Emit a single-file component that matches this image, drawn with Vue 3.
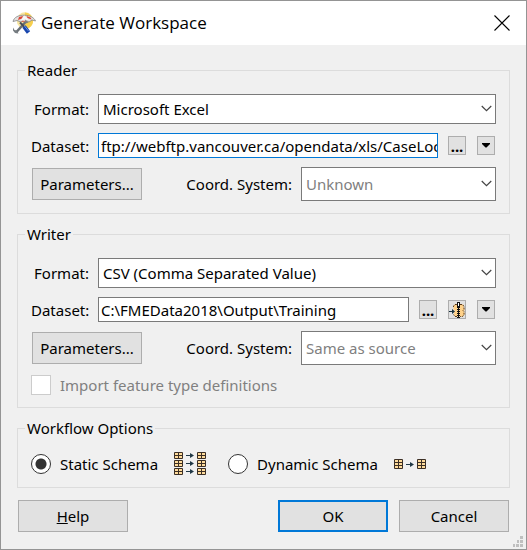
<script setup>
import { ref } from 'vue'

const readerFormat = ref('Microsoft Excel')
const readerDataset = ref('ftp://webftp.vancouver.ca/opendata/xls/CaseLoc')
const readerSystem = ref('Unknown')
const writerFormat = ref('CSV (Comma Separated Value)')
const writerDataset = ref('C:\\FMEData2018\\Output\\Training')
const writerSystem = ref('Same as source')
const importDefinitions = ref(false)
const schema = ref('static')
</script>

<template>
  <main class="dialog">
    <header class="titlebar">
      <svg class="app-icon" width="24" height="24" viewBox="0 0 24 24" aria-hidden="true">
        <circle cx="13" cy="9.500" r="8.300" fill="#f8e5a0" />
        <path d="M13 1.500a8.500 8.500 0 0 1 8 8.500c0 4-3 7-6 8l-3-5z" fill="#f6cf4e" />
        <path d="M1 10.500C2 6 7 4 12.500 4.200S22 6.500 23.500 10l-3.500-1-3 2-4-2-4 2-4-1.500z" fill="#e4e1df" stroke="#77777a" stroke-width=".7" />
        <path d="M7 6l4-1-1 2.500-4 1.500zM14.500 5l4 1.500 1 2-4-1.500zM9 10.500l3-1.500 3 2z" fill="#dc4436" />
        <path d="M9 8.500l3.500-4 4 4-4 2z" fill="#fff" opacity=".7" />
        <path d="M4 21.500L13.500 11" stroke="#6b7176" stroke-width="2.600" />
        <path d="M1 16.500l1.500 2.500 2.500.500 1.500 3-3.500-.500-2-2.500zM13 8.500l3.500 3-3 1z" fill="#777d82" />
        <path d="M8 11.500l5 5" stroke="#484e57" stroke-width="2" />
        <path d="M12 15.500l4.500 6" stroke="#1745ad" stroke-width="4" />
        <path d="M12.500 15l4 5" stroke="#6e94dd" stroke-width="1" />
      </svg>
      <h1>Generate Workspace</h1>
      <button class="close" type="button" aria-label="Close">
        <svg width="16" height="16" viewBox="0 0 16 16"><path d="M.5.5l15 15m0-15l-15 15" stroke="#000" stroke-width="1.100" /></svg>
      </button>
    </header>

    <form class="body" @submit.prevent>
      <fieldset class="group">
        <legend>Reader</legend>
        <div class="rows">
          <div class="row">
            <label class="name" for="reader-format">Format:</label>
            <div class="combo">
              <select id="reader-format" v-model="readerFormat"><option>Microsoft Excel</option></select>
              <svg class="chevron" viewBox="0 0 12 7"><path d="M.8.8L6 5.800 11.200.8" stroke-width="1.300" /></svg>
            </div>
          </div>
          <div class="row">
            <label class="name" for="reader-dataset">Dataset:</label>
            <input id="reader-dataset" v-model="readerDataset" class="text active" type="text" />
            <button class="tool dots" type="button">...</button>
            <button class="tool" type="button" aria-label="More"><svg width="8" height="5" viewBox="0 0 8 5"><path d="M0 0h8v1L4.500 4.500h-1L0 1z" /></svg></button>
          </div>
          <div class="row system">
            <button class="btn" type="button">Parameters...</button>
            <label for="reader-system">Coord. System:</label>
            <div class="combo tall">
              <select id="reader-system" v-model="readerSystem" class="muted"><option>Unknown</option></select>
              <svg class="chevron" viewBox="0 0 12 7"><path d="M.8.8L6 5.800 11.200.8" stroke-width="1.300" /></svg>
            </div>
          </div>
        </div>
      </fieldset>

      <fieldset class="group">
        <legend>Writer</legend>
        <div class="rows">
          <div class="row">
            <label class="name" for="writer-format">Format:</label>
            <div class="combo">
              <select id="writer-format" v-model="writerFormat"><option>CSV (Comma Separated Value)</option></select>
              <svg class="chevron" viewBox="0 0 12 7"><path d="M.8.8L6 5.800 11.200.8" stroke-width="1.300" /></svg>
            </div>
          </div>
          <div class="row">
            <label class="name" for="writer-dataset">Dataset:</label>
            <input id="writer-dataset" v-model="writerDataset" class="text" type="text" />
            <button class="tool dots" type="button">...</button>
            <button class="tool" type="button" aria-label="Zip">
              <svg width="16" height="16" viewBox="0 0 16 16">
                <path d="M5.500 2.500h9v3l1 1v2l-1 1 1 1v2l-1.500 2h-8l-1-2v-3l1-1-1.500-1v-3z" fill="#ffd28a" />
                <path d="M4.500 5V4l1.500-1.500h2M11 2.500h2.500l1.500 2v3l-1 1 1 1v3l-1.500 2H11M8 14.500H6l-1.500-2" fill="none" stroke="#5b3b18" stroke-dasharray="2 1" />
                <path d="M0 9.500h4" stroke="#17313e" />
                <path d="M3 7l3 2.500L3 12z" fill="#17313e" />
                <rect x="8.500" y=".5" width="2" height="4" fill="#fff" stroke="#111" />
                <path d="M9.500 5v11" stroke="#111" stroke-width="3" stroke-dasharray="1 1" />
                <path d="M9.500 5v11" stroke="#111" />
              </svg>
            </button>
            <button class="tool" type="button" aria-label="More"><svg width="8" height="5" viewBox="0 0 8 5"><path d="M0 0h8v1L4.500 4.500h-1L0 1z" /></svg></button>
          </div>
          <div class="row system">
            <button class="btn" type="button">Parameters...</button>
            <label for="writer-system">Coord. System:</label>
            <div class="combo tall">
              <select id="writer-system" v-model="writerSystem" class="muted"><option>Same as source</option></select>
              <svg class="chevron" viewBox="0 0 12 7"><path d="M.8.8L6 5.800 11.200.8" stroke-width="1.300" /></svg>
            </div>
          </div>
          <label class="choice muted">
            <input v-model="importDefinitions" class="check" type="checkbox" disabled />
            Import feature type definitions
          </label>
        </div>
      </fieldset>

      <fieldset class="group">
        <legend>Workflow Options</legend>
        <div class="options">
          <label class="choice">
            <input v-model="schema" class="radio" type="radio" name="schema" value="static" />
            Static Schema
            <svg class="schema" width="32" height="23" viewBox="0 0 32 23" aria-hidden="true">
              <g v-for="y in [0, 8, 16]" :key="y" :transform="`translate(0 ${y})`">
                <g v-for="x in [0, 23]" :key="x" :transform="`translate(${x} 0)`">
                  <path d="M.5.5h8v6h-8z" fill="#ffdc9c" stroke="#3c2f25" />
                  <path d="M4.500 1v5M1 3.500h7" stroke="#3c2f25" />
                </g>
                <path d="M12 3.500h6" stroke="#203846" />
                <path d="M16 1l4 2.500L16 6z" fill="#203846" />
              </g>
            </svg>
          </label>
          <label class="choice">
            <input v-model="schema" class="radio" type="radio" name="schema" value="dynamic" />
            Dynamic Schema
            <svg class="schema" width="32" height="10" viewBox="0 0 32 10" aria-hidden="true">
              <g v-for="x in [0, 23]" :key="x" :transform="`translate(${x} 0)`">
                <path d="M.5.5h8v9h-8z" fill="#ffdc9c" stroke="#3c2f25" />
                <path d="M4.500 1v8M1 3.500h7M1 6.500h7" stroke="#3c2f25" />
              </g>
              <path d="M12 5.500h6" stroke="#203846" />
              <path d="M16 3l4 2.500L16 8z" fill="#203846" />
            </svg>
          </label>
        </div>
      </fieldset>

      <footer class="actions">
        <button class="btn help" type="button"><u>H</u>elp</button>
        <button class="btn primary" type="submit">OK</button>
        <button class="btn" type="button">Cancel</button>
      </footer>
    </form>

    <svg class="grip" width="10" height="11" viewBox="0 0 10 11" aria-hidden="true">
      <path d="M7 0h3v3H7zM4 4h2v3H4zM7 4h3v3H7zM0 8h2v3H0zM3 8h3v3H3zM7 8h3v3H7z" fill="#bfbfbf" />
    </svg>
  </main>
</template>

<style>
body {
  margin: 0;
  background: #f0f0f0;
}
</style>

<style scoped>
.dialog,
.dialog * {
  box-sizing: border-box;
}
.dialog {
  position: relative;
  min-height: 100vh;
  border: 1px solid #949494;
  background: #f0f0f0;
  color: #000;
  font: 15px/20px "Noto Sans", "Open Sans", sans-serif;
}
button,
input,
select {
  margin: 0;
  font: inherit;
  color: inherit;
  border-radius: 0;
  outline: none;
}
.titlebar {
  display: flex;
  align-items: center;
  height: 44px;
  padding: 0 16px 0 11px;
  background: #fff;
}
h1 {
  flex: 1;
  margin: 0 0 0 5px;
  font: 17px/24px "Open Sans", "Noto Sans", sans-serif;
}
.close {
  display: flex;
  padding: 0;
  border: 0;
  background: none;
}
.body {
  padding: 15px 16px 17px;
}
.group {
  min-width: 0;
  margin: 0 0 10px;
  padding: 14px 13px 12px;
  border: 1px solid #dcdcdc;
}
.group:last-of-type {
  margin-bottom: 12px;
}
legend {
  margin-left: -6px;
  padding: 0 2px;
}
.rows {
  display: flex;
  flex-direction: column;
  gap: 9px;
}
.row {
  display: flex;
  align-items: center;
  gap: 9px;
}
.name {
  flex: 0 0 58px;
  min-width: 0;
  text-align: right;
}
.combo {
  position: relative;
  flex: 1;
  height: 30px;
}
.combo.tall {
  flex: 0 0 195px;
  height: 34px;
}
select {
  display: block;
  width: 100%;
  height: 100%;
  padding: 0 24px 0 4px;
  border: 1px solid #7a7a7a;
  background: #fff;
  appearance: none;
}
.muted {
  color: #808080;
}
.chevron {
  position: absolute;
  top: calc(50% - 4px);
  right: 4px;
  width: 11px;
  height: 7px;
  fill: none;
  stroke: #444;
  pointer-events: none;
}
.text {
  flex: 1;
  min-width: 0;
  height: 25px;
  padding: 0 0 0 2px;
  border: 1px solid #7a7a7a;
  background: #fff;
}
.text.active {
  border-color: #0078d7;
}
.tool {
  display: flex;
  flex: 0 0 18px;
  align-items: center;
  justify-content: center;
  height: 19px;
  margin: 0 1px;
  padding: 0;
  border: 1px solid #adadad;
  background: #e1e1e1;
}
.dots {
  font-weight: 700;
  line-height: 16px;
}
.btn {
  flex: 0 0 110px;
  height: 32px;
  margin: 0 1px;
  padding: 0;
  border: 1px solid #adadad;
  background: #e1e1e1;
}
.btn.primary {
  border: 2px solid #0078d7;
}
.system .btn {
  margin-right: auto;
}
.choice {
  display: flex;
  align-items: center;
  gap: 9px;
}
.rows .choice {
  margin-top: 1px;
}
.check,
.radio {
  flex: none;
  width: 20px;
  height: 20px;
  border: 1px solid #ccc;
  background: #fff;
  appearance: none;
}
.radio {
  border-color: #333;
  border-radius: 50%;
}
.radio:checked {
  background: radial-gradient(circle, #333 5px, #fff 6px);
}
.options {
  display: flex;
  gap: 22px;
}
.schema {
  margin-left: 7px;
}
.actions {
  display: flex;
  gap: 9px;
}
.help {
  margin-right: auto;
}
.grip {
  position: absolute;
  right: 3px;
  bottom: 2px;
}
</style>
